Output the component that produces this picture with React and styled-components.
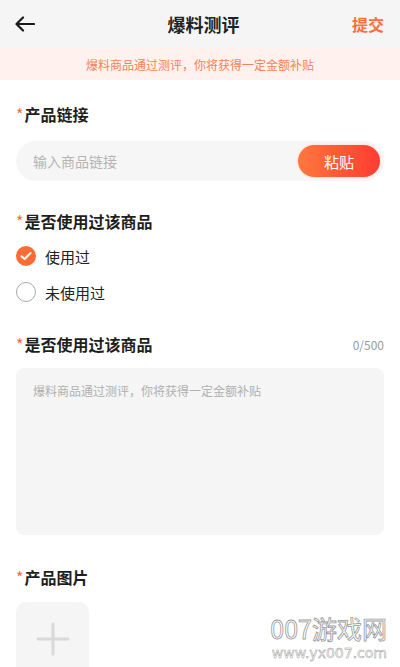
import React, { useState } from "react";
import styled, { createGlobalStyle } from "styled-components";

const GlobalStyle = createGlobalStyle`
  * { box-sizing: border-box; }
  body {
    margin: 0;
    background: #fff;
    font-family: "Noto Sans CJK SC", "Noto Sans", sans-serif;
    color: #222;
  }
`;

const Page = styled.div`
  position: relative;
  width: 400px;
  height: 667px;
  overflow: hidden;
  background: #fff;
`;

const TopBar = styled.div`
  height: 48px;
  background: #f5f5f5;
  display: flex;
  align-items: center;
  justify-content: space-between;
  padding: 0 16px 0 15px;
`;

const BackButton = styled.button`
  width: 22px;
  height: 22px;
  padding: 0;
  border: none;
  background: none;
  display: flex;
  align-items: center;
`;

const Title = styled.h1`
  margin: 0;
  font-size: 18px;
  font-weight: bold;
  color: #222;
  line-height: 22px;
  padding-left: 18px;
`;

const Submit = styled.span`
  font-size: 16px;
  font-weight: bold;
  color: #ff6e3d;
`;

const Notice = styled.div`
  height: 32px;
  background: #fff2ee;
  color: #f6825b;
  font-size: 12px;
  display: flex;
  align-items: center;
  justify-content: center;
`;

const Form = styled.div`
  padding: 0 16px;
`;

const Label = styled.div`
  display: flex;
  align-items: center;
  justify-content: space-between;
  margin-top: ${p => p.$top}px;
  height: 22px;
`;

const LabelText = styled.span`
  font-size: 16px;
  font-weight: bold;
  color: #1e1e1e;
  line-height: 22px;
  &::before {
    content: "*";
    color: #ff6a3d;
    font-weight: normal;
    margin-right: 1px;
  }
`;

const Counter = styled.span`
  font-size: 12px;
  color: #9a9a9a;
`;

const LinkField = styled.div`
  margin-top: 16px;
  height: 40px;
  border-radius: 20px;
  background: #f6f6f6;
  display: flex;
  align-items: center;
  padding: 0 4px 0 15px;
`;

const LinkInput = styled.input`
  flex: 1;
  min-width: 0;
  border: none;
  background: transparent;
  outline: none;
  font-family: inherit;
  font-size: 14px;
  color: #333;
  &::placeholder { color: #b4b4b4; }
`;

const PasteButton = styled.button`
  width: 82px;
  height: 32px;
  border: none;
  border-radius: 16px;
  background: linear-gradient(90deg, #ff773d, #ff3c32);
  box-shadow: 0 0 0 1.5px #fbe9e3;
  color: #fff;
  font-family: inherit;
  font-size: 15px;
`;

const Options = styled.div`
  margin-top: 6px;
  display: flex;
  flex-direction: column;
`;

const Option = styled.label`
  height: 36px;
  display: flex;
  align-items: center;
  gap: 9px;
  font-size: 15px;
  color: #222;
`;

const Dot = styled.span`
  width: 20px;
  height: 20px;
  border-radius: 50%;
  display: flex;
  align-items: center;
  justify-content: center;
  background: ${p => (p.$on ? "#ff6b35" : "#fff")};
  border: ${p => (p.$on ? "none" : "1px solid #a9a9a9")};
`;

const TextBox = styled.textarea`
  display: block;
  width: 100%;
  margin-top: 13px;
  height: 167px;
  border: none;
  border-radius: 8px;
  background: #f5f5f5;
  resize: none;
  outline: none;
  padding: 14px 17px;
  font-family: inherit;
  font-size: 12px;
  line-height: 18px;
  &::placeholder { color: #b0b0b0; }
`;

const Upload = styled.div`
  margin-top: 14px;
  width: 73px;
  height: 73px;
  border-radius: 10px;
  background: #f5f5f5;
  display: flex;
  align-items: center;
  justify-content: center;
`;

const Watermark = styled.div`
  position: absolute;
  right: 13px;
  bottom: 7px;
  display: flex;
  flex-direction: column;
  align-items: flex-end;
  gap: 5px;
  color: #fff;
  pointer-events: none;
`;

const MarkTitle = styled.span`
  font-size: 25px;
  line-height: 25px;
  -webkit-text-stroke: 0.8px #9a9a9a;
`;

const MarkUrl = styled.span`
  font-size: 14px;
  line-height: 14px;
  -webkit-text-stroke: 0.5px #9a9a9a;
  font-family: "DejaVu Sans", sans-serif;
`;

const Check = () => (
  <svg width="12" height="10" viewBox="0 0 12 10" fill="none" stroke="#fff" strokeWidth="2" strokeLinecap="round" strokeLinejoin="round">
    <path d="M1.5 5.2L4.6 8 10.5 2" />
  </svg>
);

export default function App() {
  const [used, setUsed] = useState(true);
  const tip = "爆料商品通过测评，你将获得一定金额补贴";

  return (
    <Page>
      <GlobalStyle />
      <TopBar>
        <BackButton>
          <svg width="20" height="16" viewBox="0 0 20 16" fill="none" stroke="#1a1a1a" strokeWidth="2.2" strokeLinecap="round" strokeLinejoin="round">
            <path d="M19 8H2M8 1.5L1.5 8 8 14.5" />
          </svg>
        </BackButton>
        <Title>爆料测评</Title>
        <Submit>提交</Submit>
      </TopBar>
      <Notice>{tip}</Notice>

      <Form>
        <Label $top={23}>
          <LabelText>产品链接</LabelText>
        </Label>
        <LinkField>
          <LinkInput placeholder="输入商品链接" />
          <PasteButton>粘贴</PasteButton>
        </LinkField>

        <Label $top={29}>
          <LabelText>是否使用过该商品</LabelText>
        </Label>
        <Options>
          <Option onClick={() => setUsed(true)}>
            <Dot $on={used}>{used && <Check />}</Dot>
            使用过
          </Option>
          <Option onClick={() => setUsed(false)}>
            <Dot $on={!used}>{!used && <Check />}</Dot>
            未使用过
          </Option>
        </Options>

        <Label $top={23}>
          <LabelText>是否使用过该商品</LabelText>
          <Counter>0/500</Counter>
        </Label>
        <TextBox placeholder={tip} />

        <Label $top={31}>
          <LabelText>产品图片</LabelText>
        </Label>
        <Upload>
          <svg width="34" height="34" viewBox="0 0 34 34" stroke="#d9d9d9" strokeWidth="3" strokeLinecap="round">
            <path d="M17 2v30M2 17h30" />
          </svg>
        </Upload>
      </Form>

      <Watermark>
        <MarkTitle>007游戏网</MarkTitle>
        <MarkUrl>www.yx007.com</MarkUrl>
      </Watermark>
    </Page>
  );
}
